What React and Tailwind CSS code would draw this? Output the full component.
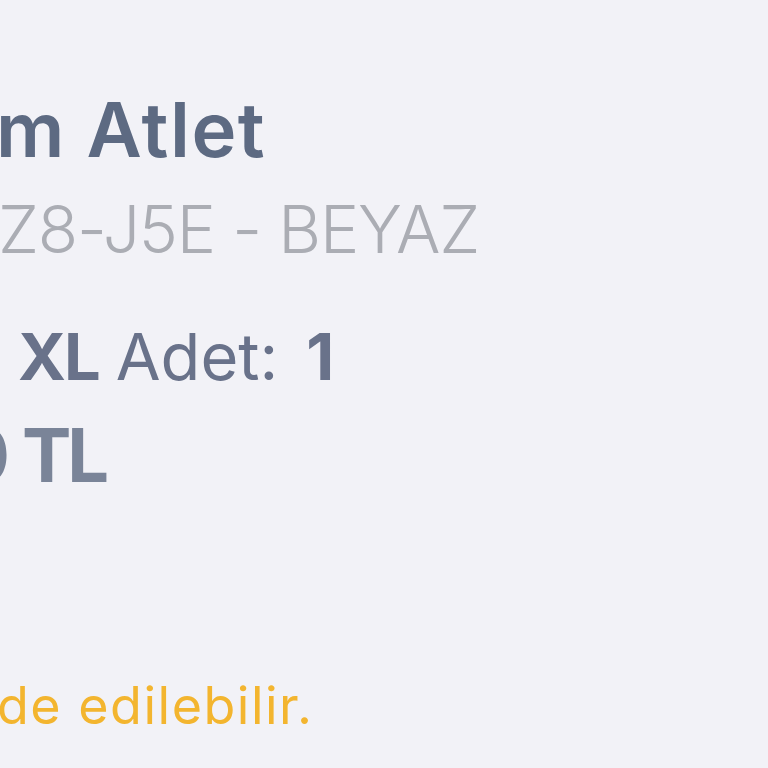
import React from "react";

const font = { fontFamily: "Inter, 'Open Sans', sans-serif" };

export default function App() {
  return (
    <div
      className="w-[768px] h-[768px] overflow-hidden bg-[#f2f2f7] whitespace-nowrap flex flex-col items-start pt-[91px]"
      style={font}
    >
      <div className="ml-[-4px] text-[76px] leading-none font-semibold text-[#5d6a82] tracking-[1.5px]">
        m Atlet
      </div>
      <div className="mt-[29px] ml-[-2px] text-[66px] leading-none font-light text-[#abadb4] tracking-[-1.2px]">
        Z8-J5E - BEYAZ
      </div>
      <div className="mt-[62px] ml-[18px] text-[65px] leading-none text-[#69728a] flex items-baseline">
        <span className="font-bold tracking-[-2px]">XL</span>
        <span className="ml-[17px] font-normal">Adet:</span>
        <span className="ml-[28px] font-bold">1</span>
      </div>
      <div className="mt-[29px] ml-[-40px] text-[74px] leading-none font-bold text-[#7a8498] flex items-baseline">
        <span>0</span>
        <span className="ml-[12px] tracking-[-4px]">TL</span>
      </div>
      <div className="mt-[188px] ml-[-3px] text-[52px] leading-none font-normal text-[#f3b52f] tracking-[1.5px]">
        de edilebilir.
      </div>
    </div>
  );
}
